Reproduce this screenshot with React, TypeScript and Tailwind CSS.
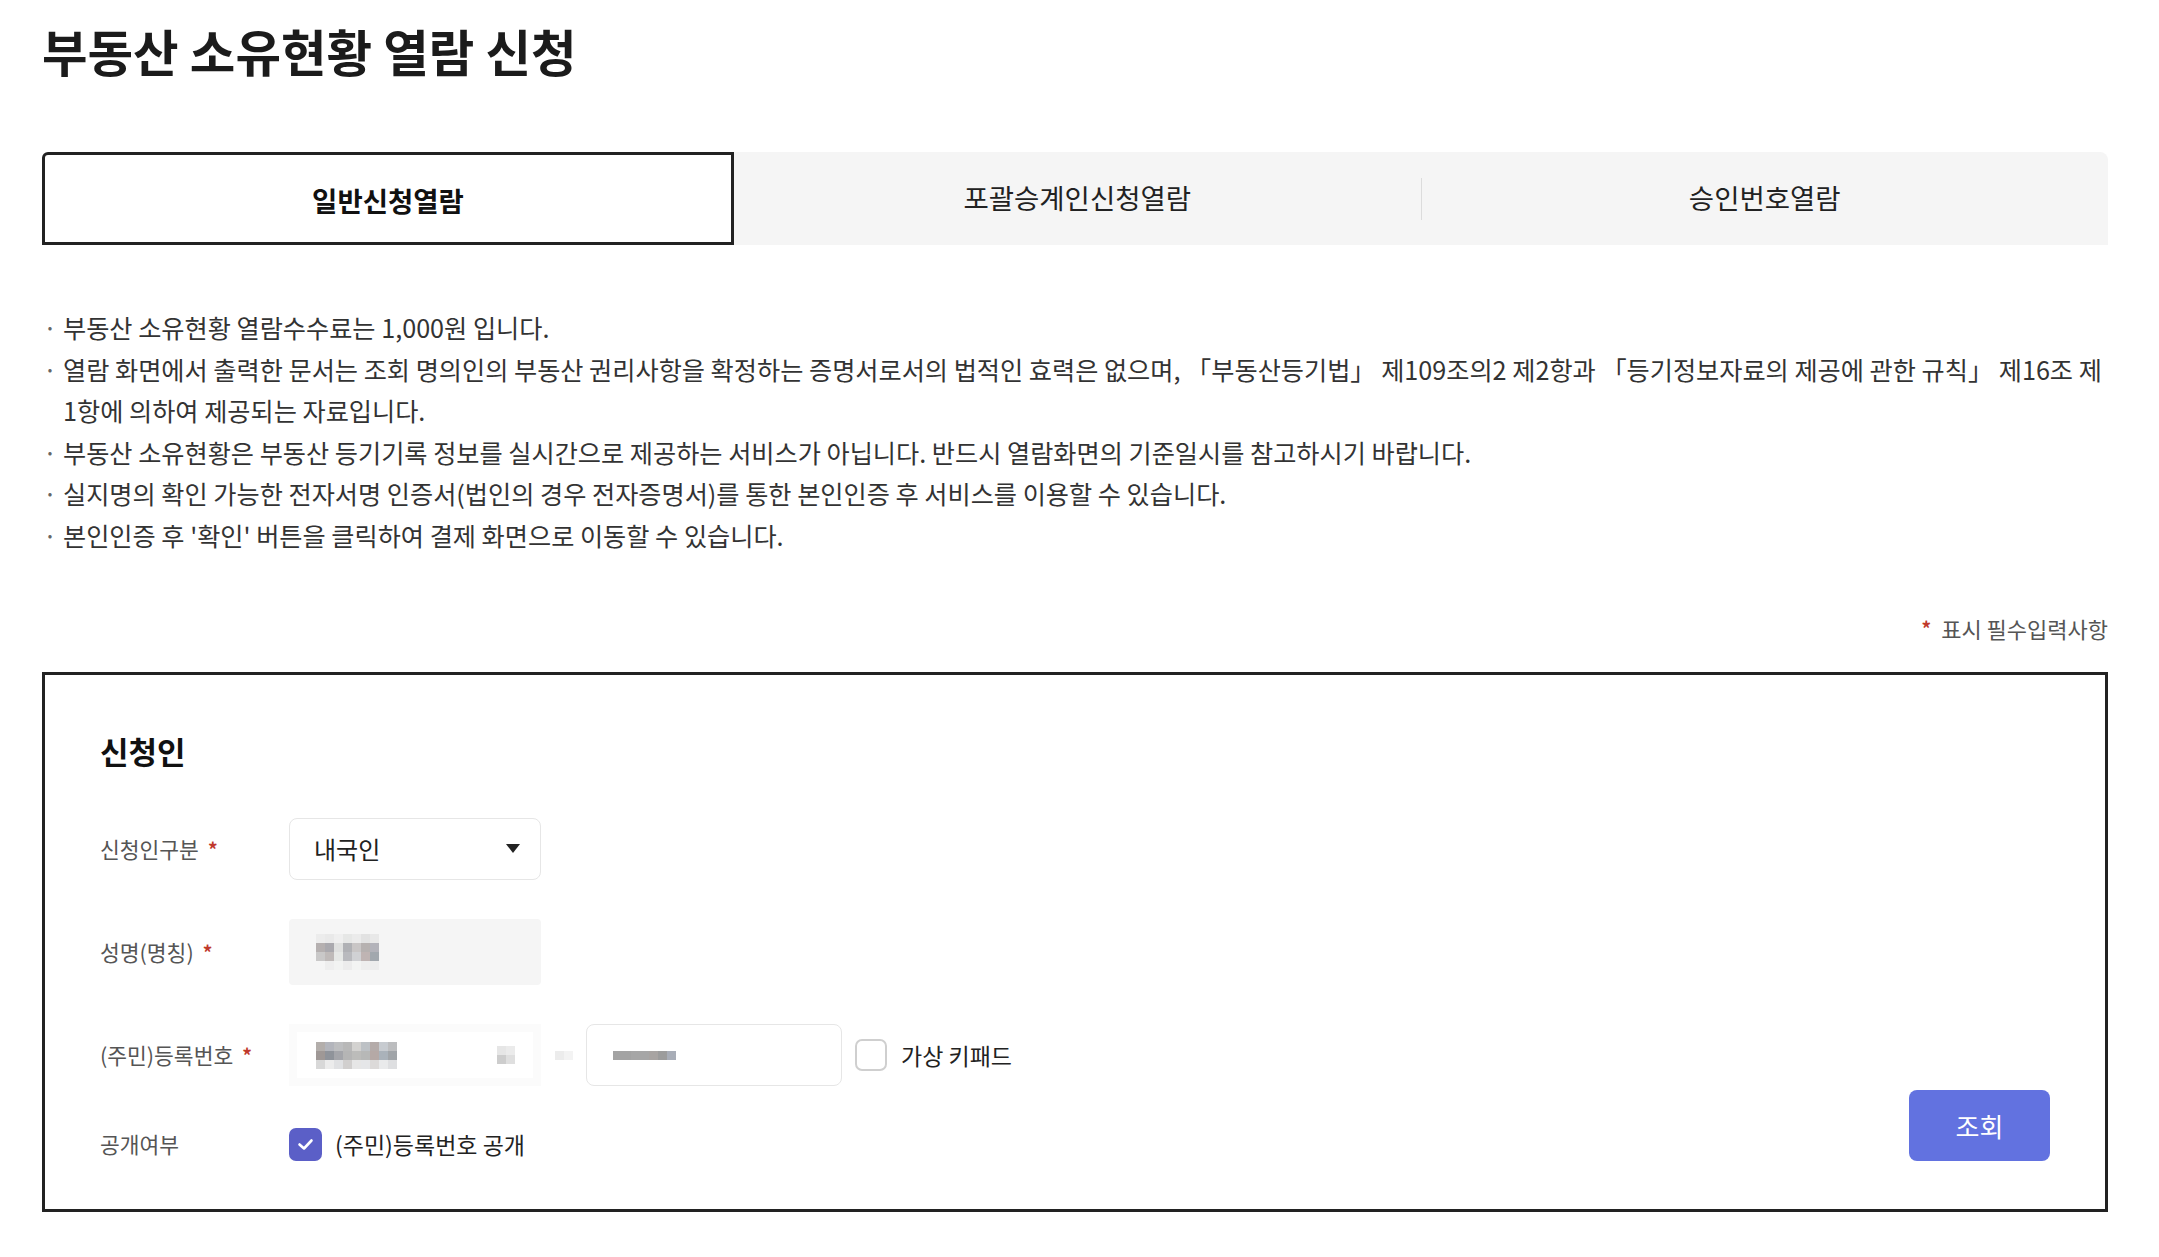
import React from "react";

const nameBlur = [
  ["#ececec", "#e9e9e9", "#efefef", "#e6e7e6", "#ebebeb", "#e2e2e2", "#e8e8e8"],
  ["#b5b0b0", "#aaa9ae", "#dfe0df", "#b0b1b5", "#c9c6c6", "#b6b1b0", "#b3b3ba"],
  ["#c9c8c8", "#bfbab9", "#e6e8e6", "#b9babe", "#d0d1d4", "#bfb4b3", "#a2a8ae"],
  ["#f5f5f5", "#eeeeee", "#f2f3f2", "#ececec", "#f3f4f3", "#eeeeee", "#ededed"],
];

const regBlur = [
  ["#b3aeab", "#b3b5bc", "#bdbec0", "#b8b8b8", "#d3d2d0", "#bdc1c5", "#b4aba9", "#c7cbd0", "#bcbdbf"],
  ["#9f9896", "#8f939a", "#a4a5aa", "#b5b5b5", "#bcbcba", "#b7b8b7", "#b5a9a6", "#aab2ba", "#a0a4a8"],
  ["#d8d8d8", "#ececec", "#e0e1e3", "#d1cfce", "#e6e6e6", "#e5e6e8", "#dcdad9", "#e9eaeb", "#dedfe1"],
];

function Pixels({ rows }: { rows: string[][] }) {
  return (
    <div className="flex flex-col">
      {rows.map((r, i) => (
        <div key={i} className="flex">
          {r.map((c, j) => (
            <div key={j} className="w-[9px] h-[9px]" style={{ backgroundColor: c }} />
          ))}
        </div>
      ))}
    </div>
  );
}

function Label({ text, required }: { text: string; required?: boolean }) {
  return (
    <div className="w-[189px] shrink-0 text-[21.5px] text-[#555] flex items-center">
      <span>{text}</span>
      {required && <span className="ml-[9px] text-[#c0392b] font-bold text-[19px]">*</span>}
    </div>
  );
}

export default function App() {
  return (
    <div className="min-h-screen bg-white font-['Noto_Sans_CJK_KR','Noto_Sans',sans-serif] text-[#222]">
      <div className="ml-[42px] w-[2066px]">
        <h1 className="pt-[22px] text-[49.5px] leading-[58px] font-bold text-[#1b1b1b]">
          부동산 소유현황 열람 신청
        </h1>

        {/* Tabs */}
        <div className="mt-[72px] flex h-[93px]">
          <div className="w-[692px] border-[3px] border-[#222] rounded-tl-[6px] flex items-center justify-center pt-[5px] text-[27.5px] font-bold text-[#111]">
            일반신청열람
          </div>
          <div className="flex-1 bg-[#f5f5f5] rounded-tr-[8px] flex items-center">
            <div className="flex-1 flex items-center justify-center text-[27.5px] text-[#222] pb-[1px]">
              포괄승계인신청열람
            </div>
            <div className="w-px h-[42px] bg-[#dcdcdc]" />
            <div className="flex-1 flex items-center justify-center text-[27.5px] text-[#222] pb-[1px]">
              승인번호열람
            </div>
          </div>
        </div>

        {/* Notices */}
        <ul className="mt-[62px] text-[25.2px] leading-[41.5px] text-[#333]">
          {[
            ["부동산 소유현황 열람수수료는 1,000원 입니다."],
            [
              "열람 화면에서 출력한 문서는 조회 명의인의 부동산 권리사항을 확정하는 증명서로서의 법적인 효력은 없으며, 「부동산등기법」 제109조의2 제2항과 「등기정보자료의 제공에 관한 규칙」 제16조 제",
              "1항에 의하여 제공되는 자료입니다.",
            ],
            ["부동산 소유현황은 부동산 등기기록 정보를 실시간으로 제공하는 서비스가 아닙니다. 반드시 열람화면의 기준일시를 참고하시기 바랍니다."],
            ["실지명의 확인 가능한 전자서명 인증서(법인의 경우 전자증명서)를 통한 본인인증 후 서비스를 이용할 수 있습니다."],
            ["본인인증 후 '확인' 버튼을 클릭하여 결제 화면으로 이동할 수 있습니다."],
          ].map((lines, i) => (
            <li key={i} className="flex">
              <span className="w-[21px] shrink-0 pl-[1px] text-[#666]">·</span>
              <div className="whitespace-nowrap">
                {lines.map((l, k) => (
                  <div key={k}>{l}</div>
                ))}
              </div>
            </li>
          ))}
        </ul>

        {/* Required note */}
        <div className="mt-[57px] flex justify-end items-center text-[22px] leading-[30px] text-[#555]">
          <span className="text-[#c0392b] font-bold text-[19px] mr-[10px]">*</span>
          <span>표시 필수입력사항</span>
        </div>

        {/* Form box */}
        <div className="mt-[29px] border-[3px] border-[#222] pl-[55px] pr-[55px] pt-[56px] pb-[48px]">
          <h2 className="text-[31px] leading-[40px] font-bold text-[#111]">신청인</h2>

          <div className="mt-[47px] flex items-end justify-between">
            <div className="flex flex-col">
              {/* Row 1 */}
              <div className="flex items-center h-[62px]">
                <Label text="신청인구분" required />
                <div className="w-[252px] h-[62px] border border-[#e6e6e6] rounded-[8px] flex items-center justify-between pl-[24px] pr-[20px]">
                  <span className="text-[24px] text-[#222]">내국인</span>
                  <svg width="14" height="10" viewBox="0 0 14 10">
                    <path d="M0 0 L14 0 L7 9 Z" fill="#222" />
                  </svg>
                </div>
              </div>

              {/* Row 2 */}
              <div className="mt-[39px] flex items-center h-[66px]">
                <Label text="성명(명칭)" required />
                <div className="w-[252px] h-[66px] bg-[#f5f5f5] rounded-[4px] flex items-center pl-[27px]">
                  <Pixels rows={nameBlur} />
                </div>
              </div>

              {/* Row 3 */}
              <div className="mt-[39px] flex items-center h-[62px]">
                <Label text="(주민)등록번호" required />
                <div className="w-[252px] h-[62px] border-[8px] border-[#fbfbfb] bg-white flex items-center pl-[19px] pr-[18px] justify-between">
                  <Pixels rows={regBlur} />
                  <div className="flex flex-col">
                    <div className="flex">
                      <div className="w-[9px] h-[9px] bg-[#e6e6e6]" />
                      <div className="w-[9px] h-[9px] bg-[#ebebeb]" />
                    </div>
                    <div className="flex">
                      <div className="w-[9px] h-[9px] bg-[#cdcdcd]" />
                      <div className="w-[9px] h-[9px] bg-[#dfdfdf]" />
                    </div>
                  </div>
                </div>
                <div className="w-[45px] flex justify-center">
                  <div className="flex">
                    <div className="w-[9px] h-[9px] bg-[#ececec]" />
                    <div className="w-[9px] h-[9px] bg-[#f3f3f3]" />
                  </div>
                </div>
                <div className="w-[256px] h-[62px] border border-[#e6e6e6] rounded-[8px] bg-white flex items-center pl-[26px]">
                  <div className="flex">
                    <div className="w-[18px] h-[9px] bg-[#a3a3a3]" />
                    <div className="w-[18px] h-[9px] bg-[#a6a6a6]" />
                    <div className="w-[9px] h-[9px] bg-[#a8a4a2]" />
                    <div className="w-[9px] h-[9px] bg-[#9c9c9c]" />
                    <div className="w-[9px] h-[9px] bg-[#a8adb7]" />
                  </div>
                </div>
                <div className="ml-[13px] w-[32px] h-[32px] border-2 border-[#cfcfcf] rounded-[7px] bg-white" />
                <span className="ml-[14px] text-[23px] text-[#222]">가상 키패드</span>
              </div>

              {/* Row 4 */}
              <div className="mt-[42px] flex items-center h-[33px]">
                <Label text="공개여부" />
                <div className="w-[33px] h-[33px] rounded-[7px] bg-[#5b5fc7] flex items-center justify-center">
                  <svg width="17" height="13" viewBox="0 0 17 13" fill="none">
                    <path d="M2.5 6.5 L7 10.5 L14.5 2.5" stroke="white" strokeWidth="2.6" strokeLinecap="round" strokeLinejoin="round" />
                  </svg>
                </div>
                <span className="ml-[13px] text-[23px] text-[#222]">(주민)등록번호 공개</span>
              </div>
            </div>

            <button className="w-[141px] h-[71px] rounded-[8px] bg-[#6272e0] text-white text-[26px]">
              조회
            </button>
          </div>
        </div>
      </div>
    </div>
  );
}
